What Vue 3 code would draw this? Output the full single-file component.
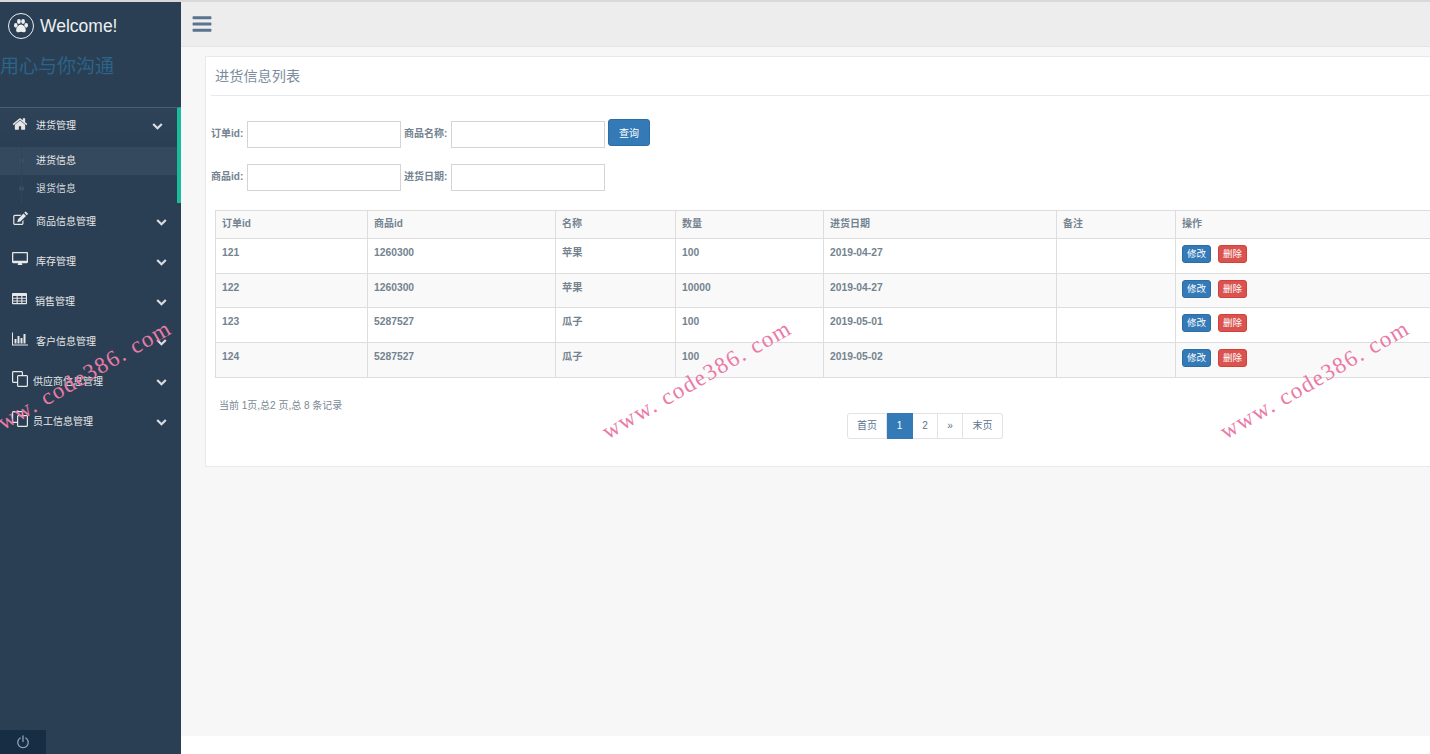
<script setup>
import { ref } from 'vue'

const chevron = 'M1683 808l-742 741q-19 19-45 19t-45-19l-742-741q-19-19-19-45.500t19-45.500l166-165q19-19 45-19t45 19l531 531 531-531q19-19 45-19t45 19l166 165q19 19 19 45.500t-19 45.500z'

const menus = ref([
  { name: '商品信息管理', icon: 'edit' },
  { name: '库存管理', icon: 'desktop' },
  { name: '销售管理', icon: 'table' },
  { name: '客户信息管理', icon: 'chart' },
  { name: '供应商信息管理', icon: 'clone', tight: true },
  { name: '员工信息管理', icon: 'clone', tight: true }
])

const columns = ['订单id', '商品id', '名称', '数量', '进货日期', '备注', '操作']

const rows = ref([
  { id: 121, goods: 1260300, name: '苹果', num: 100, date: '2019-04-27', h: 35 },
  { id: 122, goods: 1260300, name: '苹果', num: 10000, date: '2019-04-27', h: 34 },
  { id: 123, goods: 5287527, name: '瓜子', num: 100, date: '2019-05-01', h: 35 },
  { id: 124, goods: 5287527, name: '瓜子', num: 100, date: '2019-05-02', h: 35 }
])

const marks = [77, 697, 1315]
</script>

<template>
  <div class="page">
    <div class="top-line"></div>
    <div class="layout">
      <aside class="sidebar">
        <div class="brand">
          <span class="paw">
            <svg viewBox="0 0 26 26" width="18" height="18">
              <ellipse cx="5.500" cy="12" rx="2.600" ry="3.400" />
              <ellipse cx="10" cy="6.500" rx="2.700" ry="3.500" />
              <ellipse cx="16" cy="6.500" rx="2.700" ry="3.500" />
              <ellipse cx="20.500" cy="12" rx="2.600" ry="3.400" />
              <path d="M13 11c3.500 0 7 5 7 8 0 2.500-2 3-3.500 3-1.200 0-2.200-.7-3.500-.7s-2.300.7-3.500.7C8 22 6 21.500 6 19c0-3 3.500-8 7-8z" />
            </svg>
          </span>
          <span class="welcome">Welcome!</span>
        </div>
        <div class="slogan">用心与你沟通</div>

        <div class="active-group">
          <div class="menu-row head">
            <svg class="menu-icon" viewBox="0 0 1792 1792" width="16" height="16">
              <path d="M1472 992v480q0 26-19 45t-45 19h-384v-384h-256v384h-384q-26 0-45-19t-19-45v-480q0-1 .5-3t.5-3l575-474 575 474q1 2 1 6zm223-69l-62 74q-8 9-21 11h-3q-13 0-21-7l-692-577-692 577q-12 8-24 7-13-2-21-11l-62-74q-8-10-7-23.500t11-21.500l719-599q32-26 76-26t76 26l244 204v-195q0-14 9-23t23-9h192q14 0 23 9t9 23v408l219 182q10 8 11 21.500t-7 23.500z" />
            </svg>
            <span class="menu-name">进货管理</span>
            <svg class="chevron near" viewBox="0 0 1792 1792" width="11" height="11"><path :d="chevron" /></svg>
          </div>
          <div class="sub current"><i class="dot"></i>进货信息</div>
          <div class="sub"><i class="dot"></i>退货信息</div>
        </div>

        <div v-for="m in menus" :key="m.name" class="menu-row" :class="{ tight: m.tight }">
          <svg v-if="m.icon === 'edit'" class="menu-icon" viewBox="0 0 16 16" width="16" height="16">
            <path d="M11.500 9v3.200c0 1-.7 1.800-1.800 1.800H3c-1 0-1.800-.8-1.800-1.800V5.500c0-1 .8-1.800 1.800-1.800h6.500L8.300 4.900H3c-.4 0-.6.300-.6.600v6.700c0 .4.200.6.600.6h6.700c.4 0 .6-.2.600-.6v-2z" />
            <path d="M6 8.200l5.500-5.700 2.500 2.500-5.600 5.600-3.100.6zM12.300 1.700l1-1c.2-.2.500-.2.700 0l1.800 1.800c.2.200.2.500 0 .7l-1 1z" />
          </svg>
          <svg v-else-if="m.icon === 'desktop'" class="menu-icon" viewBox="0 0 16 16" width="16" height="16">
            <path fill-rule="evenodd" d="M1.200 1h13.600c.7 0 1.200.5 1.200 1.200v8.800c0 .7-.5 1.200-1.200 1.200H9.800c0 1 .5 1.300.7 1.800H5.500c.2-.5.700-.8.700-1.800h-5C.5 12.200 0 11.700 0 11V2.200C0 1.500.500 1 1.200 1zM1.300 2.300v7.400h13.400V2.300z" />
          </svg>
          <svg v-else-if="m.icon === 'table'" class="menu-icon" viewBox="0 0 16 16" width="15" height="15">
            <path fill-rule="evenodd" d="M1 2h14c.6 0 1 .4 1 1v10c0 .6-.4 1-1 1H1c-.6 0-1-.4-1-1V3c0-.6.4-1 1-1zm.2 3.200v2h3.700v-2zm4.900 0v2h3.800v-2zm5 0v2h3.700v-2zM1.200 8.200v2h3.700v-2zm4.900 0v2h3.800v-2zm5 0v2h3.700v-2zM1.200 11.200v1.600h3.700v-1.600zm4.900 0v1.600h3.800v-1.600zm5 0v1.600h3.700v-1.600z" />
          </svg>
          <svg v-else-if="m.icon === 'chart'" class="menu-icon" viewBox="0 0 16 16" width="16" height="16">
            <path d="M0 1.500h1v12h15v1H0zM2.500 8h2v4.500h-2zM5.500 5h2v7.500h-2zM8.500 7h2v5.500h-2zM11.500 3h2v9.500h-2z" />
          </svg>
          <svg v-else class="menu-icon" viewBox="0 0 16 16" width="16" height="16">
            <path fill-rule="evenodd" d="M1.500 0h8C10.300 0 11 .7 11 1.500V4h3.500c.8 0 1.500.7 1.500 1.500v9c0 .8-.7 1.500-1.500 1.500h-8C5.700 16 5 15.300 5 14.500V12H1.500C.7 12 0 11.300 0 10.500v-9C0 .7.700 0 1.500 0zm0 1.200c-.2 0-.3.100-.3.300v9c0 .2.100.3.300.3H5V5.500C5 4.700 5.700 4 6.500 4h3.300V1.500c0-.2-.1-.3-.3-.3zm5 4c-.2 0-.3.100-.3.300v9c0 .2.100.3.300.3h8c.2 0 .3-.1.300-.3v-9c0-.2-.1-.3-.3-.3z" />
          </svg>
          <span class="menu-name">{{ m.name }}</span>
          <svg class="chevron" viewBox="0 0 1792 1792" width="11" height="11"><path :d="chevron" /></svg>
        </div>

        <div class="power">
          <svg viewBox="0 0 16 16" width="14" height="14" fill="none" stroke="#8fa3b8" stroke-width="1.500" stroke-linecap="round">
            <path d="M4.800 3.400a6 6 0 1 0 6.400 0" />
            <path d="M8 1v6.500" />
          </svg>
        </div>
      </aside>

      <div class="main">
        <header class="nav">
          <svg viewBox="0 0 1792 1792" width="22" height="22" class="bars">
            <path d="M1664 1344v128q0 26-19 45t-45 19h-1408q-26 0-45-19t-19-45v-128q0-26 19-45t45-19h1408q26 0 45 19t19 45zm0-512v128q0 26-19 45t-45 19h-1408q-26 0-45-19t-19-45v-128q0-26 19-45t45-19h1408q26 0 45 19t19 45zm0-512v128q0 26-19 45t-45 19h-1408q-26 0-45-19t-19-45v-128q0-26 19-45t45-19h1408q26 0 45 19t19 45z" />
          </svg>
        </header>

        <div class="content">
          <section class="card">
            <h2 class="title">进货信息列表</h2>

            <form class="search" @submit.prevent>
              <div class="search-row">
                <label>订单id:</label>
                <input type="text" />
                <label>商品名称:</label>
                <input type="text" />
                <button class="query" type="button">查询</button>
              </div>
              <div class="search-row second">
                <label>商品id:</label>
                <input type="text" />
                <label>进货日期:</label>
                <input type="text" />
              </div>
            </form>

            <table class="grid">
              <colgroup>
                <col style="width: 152px" />
                <col style="width: 188px" />
                <col style="width: 120px" />
                <col style="width: 148px" />
                <col style="width: 233px" />
                <col style="width: 119px" />
                <col />
              </colgroup>
              <thead>
                <tr><th v-for="c in columns" :key="c">{{ c }}</th></tr>
              </thead>
              <tbody>
                <tr v-for="r in rows" :key="r.id" :style="{ height: r.h + 'px' }">
                  <td>{{ r.id }}</td>
                  <td>{{ r.goods }}</td>
                  <td>{{ r.name }}</td>
                  <td>{{ r.num }}</td>
                  <td>{{ r.date }}</td>
                  <td></td>
                  <td class="ops">
                    <span class="tag blue">修改</span>
                    <span class="tag red">删除</span>
                  </td>
                </tr>
              </tbody>
            </table>

            <p class="summary">当前 1页,总2 页,总 8 条记录</p>

            <div class="pager">
              <a class="wide">首页</a>
              <a class="on">1</a>
              <a>2</a>
              <a>»</a>
              <a class="wide">末页</a>
            </div>
          </section>
        </div>
        <div class="foot"></div>
      </div>
    </div>

    <span v-for="x in marks" :key="x" class="mark" :style="{ left: x + 'px' }">www. code386. com</span>
  </div>
</template>

<style>
html, body {
  margin: 0;
  overflow: hidden;
}
</style>

<style scoped>
.page {
  position: relative;
  width: 1430px;
  height: 754px;
  overflow: hidden;
  display: flex;
  flex-direction: column;
  font-family: "Liberation Sans", "Noto Sans CJK SC", sans-serif;
  color: #73879c;
  background: #fff;
}

.top-line {
  height: 2px;
  background: #d9d9d9;
  flex: none;
}

.layout {
  flex: 1;
  display: flex;
  min-height: 0;
}

.sidebar {
  position: relative;
  width: 181px;
  flex: none;
  background: #2a3f54;
  box-sizing: border-box;
}

.brand {
  display: flex;
  align-items: center;
  height: 48px;
  padding-left: 8px;
  gap: 6px;
}

.paw {
  width: 24px;
  height: 24px;
  border: 1px solid #ecf0f1;
  border-radius: 50%;
  display: flex;
  align-items: center;
  justify-content: center;
  fill: #ecf0f1;
}

.welcome {
  font-size: 17.500px;
  color: #ecf0f1;
}

.slogan {
  font-size: 19px;
  line-height: 24px;
  color: #2b6488;
  margin-top: 5px;
  height: 28px;
}

.active-group {
  margin-top: 24px;
  border-top: 1px solid #4b5d70;
  border-right: 4px solid #1abb9c;
  height: 95px;
  background: linear-gradient(#2f4358, #2a3f54 40px);
}

.menu-row {
  height: 40px;
  display: flex;
  align-items: center;
  padding-left: 12px;
  padding-bottom: 6px;
  box-sizing: border-box;
  font-size: 10px;
  color: #e7e7e7;
  fill: #e7e7e7;
  position: relative;
}

.menu-row.head {
  height: 39px;
}

.menu-row.head .menu-icon {
  margin-top: -1px;
}

.menu-icon {
  flex: none;
  margin-top: -3px;
}

.menu-name {
  margin-left: 8px;
  white-space: nowrap;
}

.menu-row.tight .menu-name {
  margin-left: 5px;
}

.chevron {
  position: absolute;
  right: 14px;
  top: 13px;
  fill: #d8dde2;
}

.chevron.near {
  right: 14px;
  top: 12px;
}

.sub {
  position: relative;
  height: 28px;
  line-height: 27px;
  padding-left: 36px;
  font-size: 10px;
  color: #d5dadf;
}

.sub.current {
  background: #35495e;
  color: #e7e7e7;
}

.dot {
  position: absolute;
  left: 19px;
  top: 11px;
  width: 5px;
  height: 5px;
  border-radius: 50%;
  background: #3d5063;
}

.dot::after {
  content: "";
  position: absolute;
  left: 2px;
  top: -11px;
  width: 1px;
  height: 28px;
  background: #31455a;
}

.power {
  position: absolute;
  left: 0;
  bottom: 0;
  width: 46px;
  height: 24px;
  background: #172d44;
  display: flex;
  align-items: center;
  justify-content: center;
}

.main {
  flex: 1;
  min-width: 0;
  display: flex;
  flex-direction: column;
  overflow: hidden;
}

.nav {
  height: 45px;
  flex: none;
  box-sizing: border-box;
  background: #ededed;
  border-bottom: 1px solid #e2e5e8;
  display: flex;
  align-items: center;
  padding-left: 10px;
}

.bars {
  fill: #5a738e;
}

.content {
  flex: 1;
  background: #f7f7f7;
  padding: 9px 0 0 24px;
}

.foot {
  height: 18px;
  flex: none;
  background: #fff;
}

.card {
  width: 1440px;
  height: 411px;
  box-sizing: border-box;
  background: #fff;
  border: 1px solid #e6e9ed;
  padding: 0 0 0 5px;
}

.title {
  margin: 0;
  height: 39px;
  line-height: 38px;
  box-sizing: border-box;
  padding-left: 4px;
  font-size: 14.200px;
  font-weight: 400;
  color: #7b8c9e;
  border-bottom: 1px solid #e6e9ed;
}

.search {
  margin-top: 25px;
}

.search-row {
  display: flex;
  align-items: center;
  height: 27px;
}

.search-row.second {
  margin-top: 16px;
}

.search-row label {
  font-size: 10px;
  font-weight: 700;
  color: #74838f;
  white-space: nowrap;
  margin-top: -5px;
}

.search-row label:first-child {
  width: 36px;
}

.search-row label:nth-child(3) {
  width: 47px;
  margin-left: 3px;
  text-align: left;
}

.search-row input {
  width: 154px;
  height: 27px;
  box-sizing: border-box;
  border: 1px solid #d4d4d4;
  background: #fff;
  padding: 0;
  outline: none;
}

.query {
  width: 42px;
  height: 27px;
  margin-left: 3px;
  margin-top: -5px;
  border: 1px solid #2e6da4;
  border-radius: 3px;
  background: #337ab7;
  color: #fff;
  font: 10px "Liberation Sans", "Noto Sans CJK SC", sans-serif;
  padding: 0;
}

.grid {
  margin: 19px 0 0 4px;
  width: 1400px;
  table-layout: fixed;
  border-collapse: collapse;
  font-size: 10.300px;
  font-weight: 700;
  color: #74838f;
}

.grid th,
.grid td {
  border: 1px solid #ddd;
  padding: 6px 6px 0;
  text-align: left;
  vertical-align: top;
  line-height: 15px;
}

.grid th {
  height: 28px;
  box-sizing: border-box;
  background: #f9f9f9;
  font-weight: 700;
  font-size: 10px;
  padding-top: 5px;
}

.grid tbody tr:nth-child(even) {
  background: #f9f9f9;
}

.grid .ops {
  padding-top: 6px;
  font-weight: 400;
}

.tag {
  display: inline-block;
  width: 29px;
  height: 18px;
  line-height: 16px;
  margin-right: 7px;
  border-radius: 3px;
  text-align: center;
  font-size: 9.500px;
  color: #fff;
  box-sizing: border-box;
  vertical-align: top;
}

.tag.blue {
  background: #337ab7;
  border: 1px solid #2e6da4;
}

.tag.red {
  background: #d9534f;
  border: 1px solid #d43f3a;
}

.summary {
  margin: 21px 0 0 8px;
  font-size: 10px;
  line-height: 14px;
  color: #7b8894;
}

.pager {
  display: flex;
  width: 156px;
  height: 26px;
  margin: 0 0 0 636px;
  font-size: 10px;
  color: #5a738e;
  border-radius: 3px;
}

.pager a {
  box-sizing: border-box;
  width: 25px;
  line-height: 24px;
  text-align: center;
  border: 1px solid #e3e3e3;
  border-left: 0;
}

.pager a.wide {
  width: 40px;
}

.pager a:first-child {
  border-left: 1px solid #e3e3e3;
  border-radius: 3px 0 0 3px;
}

.pager a:last-child {
  border-radius: 0 3px 3px 0;
}

.pager a.on {
  width: 26px;
  background: #337ab7;
  border-color: #337ab7;
  color: #fff;
}

.mark {
  position: absolute;
  top: 380px;
  transform: translate(-50%, -50%) rotate(-30deg);
  font-family: "Liberation Serif", serif;
  font-size: 23px;
  letter-spacing: 1.500px;
  color: #ea7aa6;
  white-space: nowrap;
}
</style>
